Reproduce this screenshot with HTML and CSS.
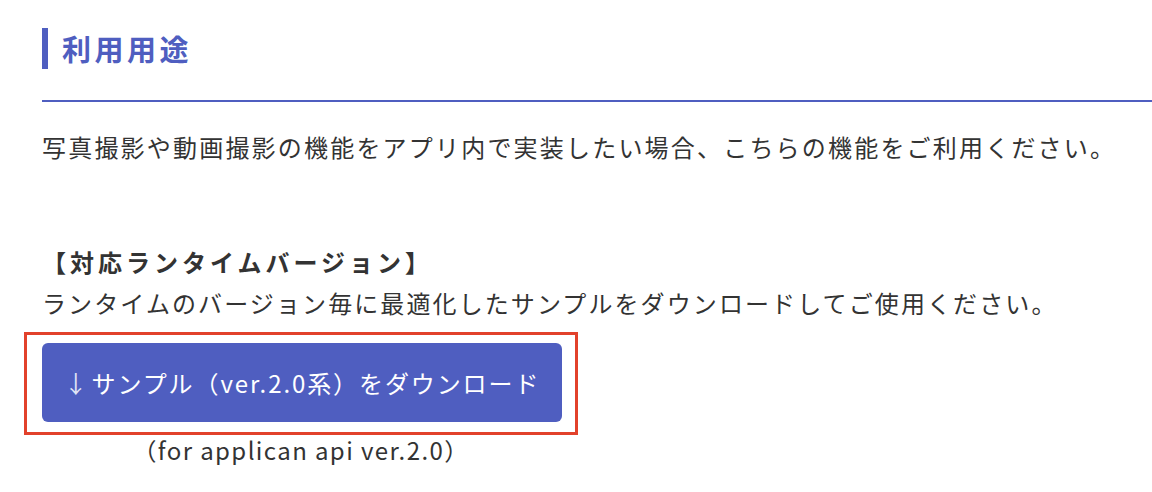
FILE: index.html
```html
<!DOCTYPE html>
<html lang="ja">
<head>
    <meta charset="UTF-8">
    <meta name="viewport" content="width=device-width, initial-scale=1.0">
    <title>利用用途</title>
    <link rel="stylesheet" href="styles.css">
</head>
<body>

    <div class="doc-section">
        <!-- Section title -->
        <h2 class="section-title">利用用途</h2>
        <hr class="section-rule">

        <p class="lead">写真撮影や動画撮影の機能をアプリ内で実装したい場合、こちらの機能をご利用ください。</p>

        <!-- Runtime versions -->
        <div class="runtime">
            <h3 class="runtime-title">【対応ランタイムバージョン】</h3>
            <p class="runtime-text">ランタイムのバージョン毎に最適化したサンプルをダウンロードしてご使用ください。</p>

            <div class="download">
                <div class="download-focus">
                    <a class="download-btn" href="#">
                        <span class="arrow">↓</span>サンプル（ver.2.0系）をダウンロード
                    </a>
                </div>
                <p class="download-note">（for applican api ver.2.0）</p>
            </div>
        </div>
    </div>

</body>
</html>
```

FILE: styles.css
```css
body {
    font-family: "Noto Sans CJK JP", "Noto Sans", sans-serif;
    margin: 0;
    padding: 0;
    background-color: #fff;
    color: #333;
}

.doc-section {
    padding: 28px 0 0 42px;
}

.section-title {
    margin: 0;
    padding-left: 14px;
    border-left: 6px solid #4f5ec0;
    font-size: 29px;
    line-height: 41px;
    letter-spacing: 3.5px;
    font-weight: 700;
    color: #4f5ec0;
}

.section-rule {
    margin: 31px 0 0 0;
    border: none;
    height: 2px;
    background-color: #4f5ec0;
}

.lead {
    margin: 27px 0 0 0;
    font-size: 24px;
    line-height: 36px;
    letter-spacing: 2.2px;
}

.runtime {
    margin-top: 79px;
}

.runtime-title {
    margin: 0;
    font-size: 24px;
    line-height: 36px;
    letter-spacing: 4px;
    font-weight: 700;
}

.runtime-text {
    margin: 5px 0 0 0;
    font-size: 24px;
    line-height: 36px;
    letter-spacing: 2.1px;
}

.download {
    display: inline-flex;
    flex-direction: column;
    align-items: center;
    margin-left: -18px;
    margin-top: 11px;
}

.download-focus {
    border: 3px solid #e2412b;
    padding: 8px 13px 10px 15px;
}

.download-btn {
    display: flex;
    align-items: center;
    justify-content: center;
    width: 520px;
    height: 79px;
    background-color: #4f5ec0;
    border-radius: 6px;
    color: #fff;
    text-decoration: none;
    font-size: 24px;
    letter-spacing: 1.9px;
}

.arrow {
    margin-right: 2px;
    color: #dfe3f5;
}

.download-note {
    margin: 0;
    font-size: 24px;
    line-height: 30px;
    letter-spacing: 1.4px;
}
```
